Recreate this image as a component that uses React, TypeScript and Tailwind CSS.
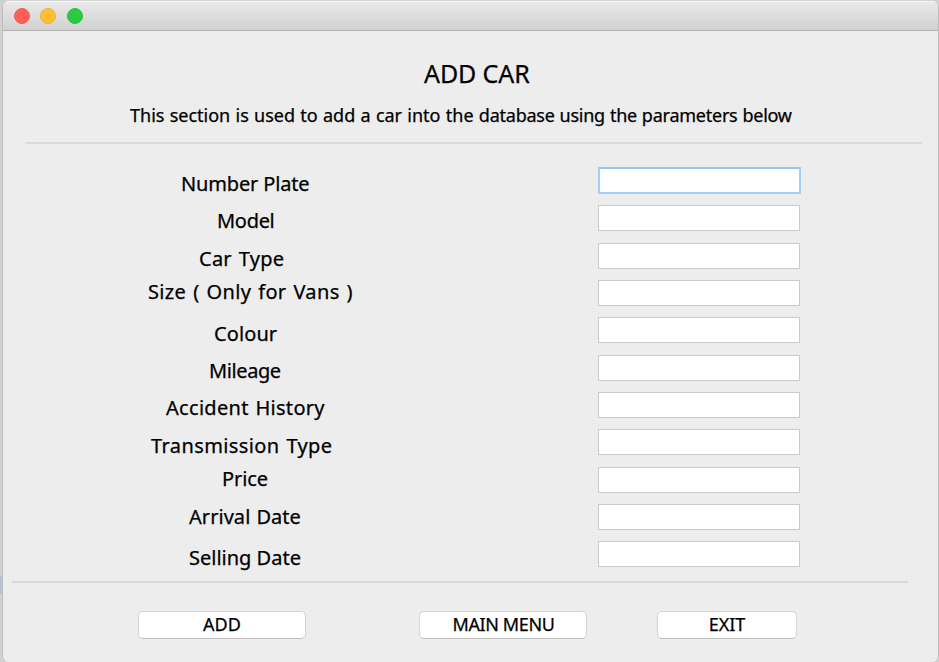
const fields = [
  { label: 'Number Plate', cls: 'pl-[178px] pt-[8px] tracking-[-0.15px]', focused: true },
  { label: 'Model', cls: 'pl-[214px] pt-[8px] tracking-[-0.3px]' },
  { label: 'Car Type', cls: 'pl-[196px] pt-[8px] tracking-[0.25px] [word-spacing:1.5px]' },
  { label: 'Size ( Only for Vans )', cls: 'pl-[145px] pt-[4px] tracking-[0.35px] [word-spacing:1.4px]' },
  { label: 'Colour', cls: 'pl-[211px] pt-[8.2px] tracking-[0.1px]' },
  { label: 'Mileage', cls: 'pl-[206px] pt-[8px] tracking-[-0.4px]' },
  { label: 'Accident History', cls: 'pl-[163px] pt-[8px] tracking-[0.3px] [word-spacing:1.2px]' },
  { label: 'Transmission Type', cls: 'pl-[148px] pt-[8px] tracking-[0.4px] [word-spacing:1.2px]' },
  { label: 'Price', cls: 'pl-[219px] pt-[4px] tracking-[-0.1px]' },
  { label: 'Arrival Date', cls: 'pl-[186px] pt-[4.4px] tracking-[0.05px] [word-spacing:0.8px]' },
  { label: 'Selling Date', cls: 'pl-[186px] pt-[8px] tracking-[0px]' },
];

const buttonBase =
  'h-[28px] shrink-0 rounded-[5px] border border-[#d2d2d2] border-b-[#bcbcbc] bg-white pb-[2px] text-center text-[18px] leading-[24px] whitespace-nowrap';

export default function App() {
  return (
    <div className="flex h-[662px] w-[939px] overflow-hidden bg-[#d2d2d2] pt-px font-['Noto_Sans','Open_Sans',sans-serif] text-black [-webkit-text-stroke:0.25px_black]">
      <div className="flex w-[2px] shrink-0 flex-col pt-[575px]">
        <div className="h-[18px] bg-[#b7c3d3]" />
      </div>
      <div className="flex h-[661px] w-[937px] shrink-0 flex-col overflow-hidden rounded-[6px] border-x border-[#bcbcbc] bg-[#ededed]">
        <header className="flex h-[30px] shrink-0 items-center gap-[10.6px] border-t border-b border-t-[#f5f5f5] border-b-[#b1b1b1] bg-linear-to-b from-[#e9e9e9] to-[#d1d1d1] pl-[10.6px]">
          <span className="size-[16px] rounded-full border border-[#ee5d57] bg-[#ff5f58]" />
          <span className="size-[16px] rounded-full border border-[#edb236] bg-[#ffbf2f]" />
          <span className="size-[16px] rounded-full border border-[#2ebc44] bg-[#28cb42]" />
        </header>
        <h1 className="mt-[25px] h-[34px] shrink-0 pl-[421px] text-[25px] leading-[34px] tracking-[-0.1px] whitespace-nowrap">ADD CAR</h1>
        <p className="mt-[12px] h-[26px] shrink-0 pl-[127px] text-[18px] leading-[26px] whitespace-nowrap">
          <span className="[word-spacing:0.6px]">This section is used to add a car into the </span>
          <span className="tracking-[-0.24px] [word-spacing:0.5px]">database using the parameters below</span>
        </p>
        <div className="mt-[14px] ml-[22px] h-[2px] w-[897px] shrink-0 bg-[#dadada]" />
        <form className="mt-[22px] flex shrink-0 flex-col">
          {fields.map((f) => (
            <label key={f.label} className="flex h-[37.36px] shrink-0">
              <span className={`w-[595px] shrink-0 text-[20px] leading-[20px] whitespace-nowrap ${f.cls}`}>{f.label}</span>
              <input
                aria-label={f.label}
                className={
                  f.focused
                    ? 'mt-px h-[27px] w-[203px] rounded-[1px] border-2 border-[#a6cdf4] border-t-[#94c2f1] bg-white outline-none'
                    : 'mt-[1.9px] h-[26px] w-[202px] border border-[#cacaca] bg-white outline-none'
                }
              />
            </label>
          ))}
        </form>
        <div className="mt-[4.04px] ml-[9px] h-[2px] w-[896px] shrink-0 bg-[#d8d8d8]" />
        <footer className="mt-[28px] flex shrink-0 pl-[135px]">
          <button className={`${buttonBase} w-[168px]`}>ADD</button>
          <button className={`${buttonBase} ml-[113px] w-[168px] tracking-[-0.4px]`}><span className="pl-[1px]">MAIN MENU</span></button>
          <button className={`${buttonBase} ml-[70px] w-[140px]`}>EXIT</button>
        </footer>
      </div>
    </div>
  );
}
